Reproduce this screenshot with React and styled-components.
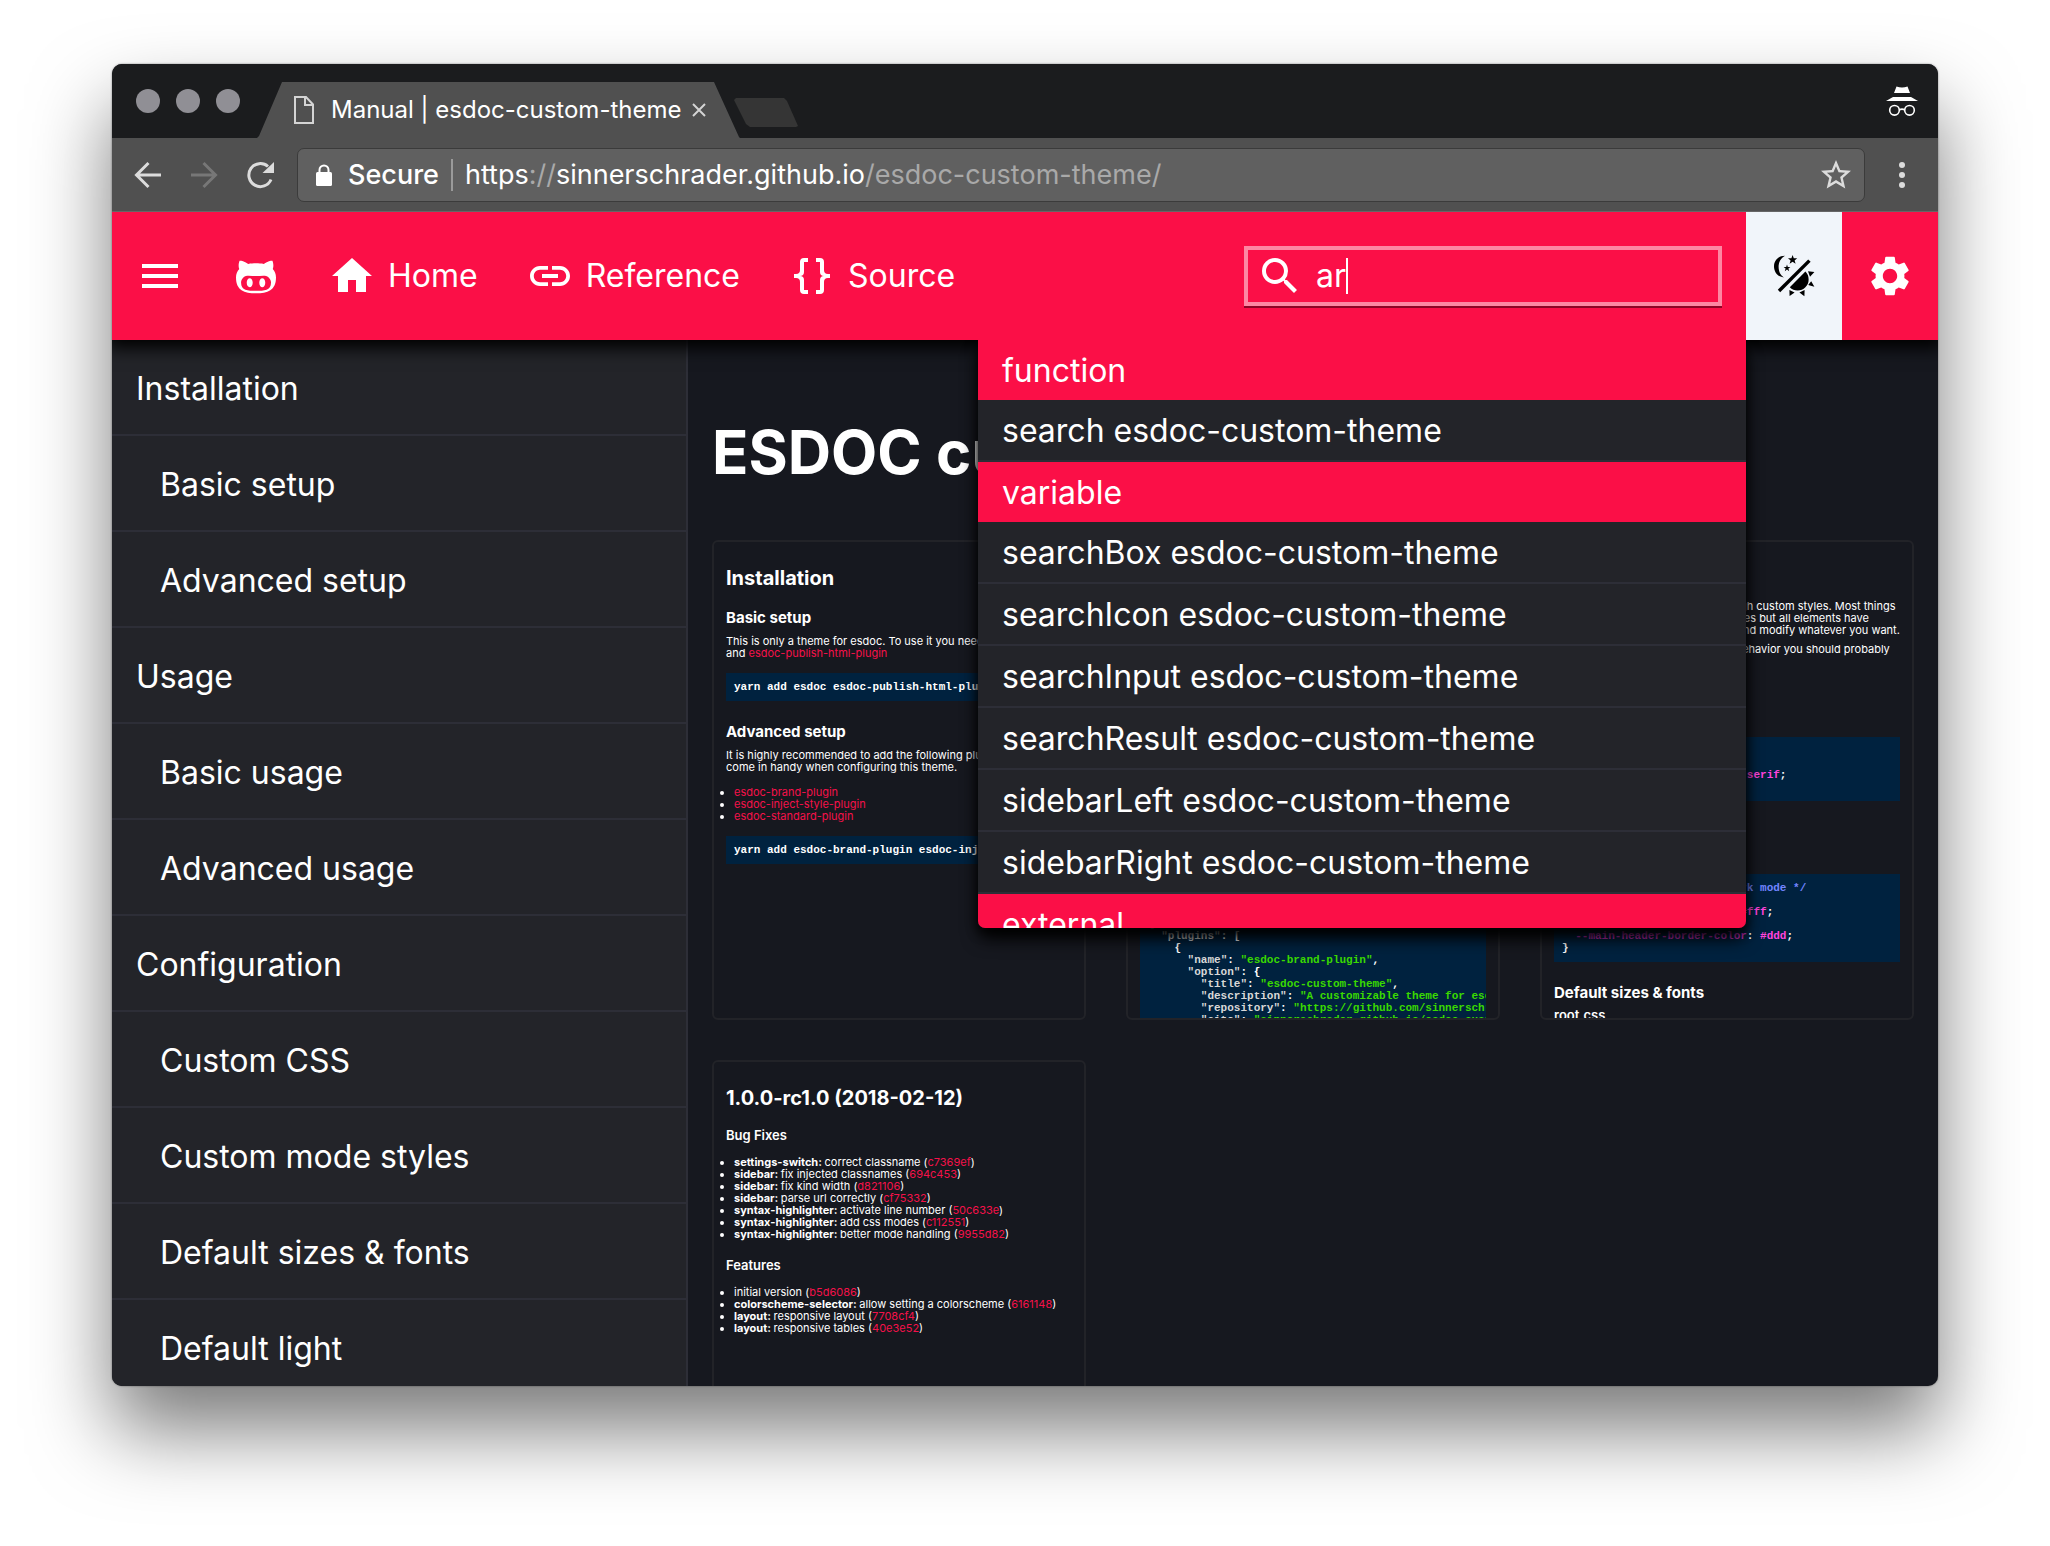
import React, { useState } from "react";
import styled, { createGlobalStyle, css } from "styled-components";
import { MdHome, MdLink, MdMenu, MdSearch, MdSettings, MdStarBorder } from "react-icons/md";

const color = {
  brand: "#fb0f47",
  page: "#16181f",
  panel: "#232429",
  line: "#2d2e37",
  code: "#00223f",
  chrome: "#505050",
};

const GlobalStyle = createGlobalStyle`
  *, *::before, *::after { box-sizing: border-box; }
  body {
    margin: 0;
    background: #fff;
    color: #fff;
    font-family: Inter, "Liberation Sans", sans-serif;
    -webkit-font-smoothing: antialiased;
  }
  a { color: inherit; text-decoration: none; }
  button { border: 0; padding: 0; background: none; color: inherit; font: inherit; cursor: pointer; }
  h1, h2, h3, h4, p, ul, pre { margin: 0; padding: 0; }
  svg { display: block; flex: none; }
`;

const Desktop = styled.div`
  height: 100vh;
  padding: 64px 112px 160px;
`;

const Window = styled.div`
  display: flex;
  flex-direction: column;
  height: 100%;
  overflow: hidden;
  border-radius: 10px;
  background: ${color.page};
  box-shadow: 0 0 2px rgba(0, 0, 0, 0.5), 0 44px 80px rgba(0, 0, 0, 0.52);
`;

/* ---------- browser chrome ---------- */

const TabStrip = styled.div`
  display: flex;
  align-items: flex-end;
  flex: none;
  height: 74px;
  padding: 0 20px 0 24px;
  background: #1b1c1e;
`;

const Lights = styled.div`
  display: flex;
  align-self: center;
  gap: 16px;
  width: 121px;
`;

const Light = styled.button`
  width: 24px;
  height: 24px;
  border-radius: 50%;
  background: #908f95;
`;

const Tab = styled.div`
  display: flex;
  align-items: center;
  height: 56px;
  width: 483px;
  padding: 0 34px 0 36px;
  background: ${color.chrome};
  clip-path: polygon(25px 0, 457px 0, 482px 55px, 483px 56px, 0 56px, 2px 54px);
  font-size: 24px;
  line-height: 32px;
  white-space: nowrap;
`;

const TabTitle = styled.span`
  flex: 1;
  margin-left: 16px;
`;

const NewTab = styled.button`
  width: 64px;
  height: 29px;
  margin: 0 auto 11px -6px;
  background: #353535;
  clip-path: polygon(0 2px, 2px 0, 50px 0, 53px 3px, 64px 28px, 62px 29px, 16px 29px, 12px 26px);
`;

const Incognito = styled.div`
  align-self: center;
`;

const Toolbar = styled.div`
  position: relative;
  z-index: 3;
  display: flex;
  align-items: center;
  flex: none;
  height: 74px;
  padding: 0 20px;
  background: ${color.chrome};
  border-bottom: 1px solid #666;
  color: #dcdcdc;
`;

const NavButton = styled.button`
  display: grid;
  place-items: center;
  width: 32px;
  height: 32px;
  margin-right: ${(p) => p.$gap || 24}px;
  color: ${(p) => (p.disabled ? "#777" : "#dcdcdc")};
`;

const AddressBar = styled.div`
  display: flex;
  align-items: center;
  flex: 1;
  height: 54px;
  padding: 0 10px 0 18px;
  border: 1px solid #3b3b3b;
  border-radius: 7px;
  background: #606060;
  color: #fff;
  font-size: 27px;
  line-height: 32px;
  white-space: nowrap;
`;

const Secure = styled.span`
  margin: 0 12px 0 16px;
  padding-right: 12px;
  border-right: 2px solid #9a9a9a;
  font-weight: 500;
`;

const Url = styled.span`
  flex: 1;
`;

const Faint = styled.span`
  color: #a9a9a9;
`;

const MenuButton = styled(NavButton)`
  margin: 0 0 0 21px;
`;

/* ---------- site header ---------- */

const Header = styled.header`
  position: relative;
  z-index: 2;
  display: flex;
  align-items: stretch;
  flex: none;
  height: 128px;
  background: ${color.brand};
  box-shadow: 0 4px 16px 4px #000;
  font-size: 32px;
  line-height: 40px;
`;

const IconButton = styled.button`
  display: grid;
  place-items: center;
  width: 96px;
  color: ${(p) => (p.$light ? "#000" : "#fff")};
  background: ${(p) => (p.$light ? "#f1f5fa" : "transparent")};
`;

const HeaderNav = styled.nav`
  display: flex;
  flex: 1;
`;

const HeaderLink = styled.a`
  display: flex;
  align-items: center;
  gap: 12px;
  padding: 0 24px;
`;

const SearchArea = styled.div`
  position: relative;
  display: flex;
  align-items: center;
  padding-right: 24px;
`;

const SearchField = styled.label`
  display: flex;
  align-items: center;
  width: 478px;
  height: 60px;
  padding: 0 8px;
  border: 4px solid #fd87a3;
  box-shadow: 0 2px 0 #8d0526;
`;

const SearchInput = styled.input`
  field-sizing: content;
  min-width: 16px;
  margin-left: 12px;
  padding: 0;
  border: 0;
  outline: 0;
  background: none;
  color: #fff;
  font: inherit;
`;

const Caret = styled.span`
  width: 2px;
  height: 36px;
  background: #fff;
`;

const Results = styled.div`
  position: absolute;
  top: 100%;
  right: 0;
  width: 768px;
  max-height: 588px;
  overflow: hidden;
  border-radius: 0 0 7px 7px;
  background: ${color.panel};
  box-shadow: 0 12px 18px -2px #000, 0 4px 12px rgba(0, 0, 0, 0.8);
  clip-path: inset(0 -40px -40px -40px);
`;

const resultRow = css`
  display: block;
  padding: 11px 24px 9px;
  font-size: 32px;
  line-height: 40px;
  font-weight: 400;
`;

const ResultKind = styled.h2`
  ${resultRow}
  background: ${color.brand};
`;

const ResultLink = styled.a`
  ${resultRow}
  border-bottom: 2px solid ${color.line};
`;

/* ---------- page ---------- */

const Body = styled.div`
  display: flex;
  flex: 1;
  min-height: 0;
`;

const Sidebar = styled.nav`
  flex: 0 0 576px;
  overflow: hidden;
  border-right: 2px solid ${color.line};
  background: ${color.panel};
`;

const SidebarLink = styled.a`
  display: block;
  padding: 29px 24px 25px ${(p) => (p.$nested ? 48 : 24)}px;
  border-bottom: 2px solid ${color.line};
  font-size: 32px;
  line-height: 40px;
`;

const Main = styled.main`
  flex: 1;
  min-width: 0;
  overflow: hidden;
  padding: 72px 24px 0;
`;

const PageTitle = styled.h1`
  margin-bottom: 48px;
  font-size: 60px;
  line-height: 80px;
  font-weight: 700;
`;

const Cards = styled.div`
  display: grid;
  grid-template-columns: repeat(3, minmax(0, 1fr));
  grid-auto-rows: 480px;
  gap: 40px;
`;

const Card = styled.article`
  overflow: hidden;
  padding: 24px 12px 0;
  border: 2px solid #222328;
  border-radius: 6px;
  font-size: 11px;
  line-height: 12px;
  white-space: nowrap;
`;

const H2 = styled.h2`
  font-size: 20px;
  line-height: 24px;
  font-weight: 700;
`;

const P = styled.p`
  margin-top: 7px;

  ${H2} + & {
    margin-top: 10px;
  }
`;

const List = styled.ul`
  margin-top: 13px;
  padding-left: 8px;
`;

const Code = styled.pre`
  margin-top: 14px;
  padding: 8px;
  overflow: hidden;
  background: ${color.code};
  color: #fff;
  font-family: "Liberation Mono", monospace;
  font-size: 11px;
  line-height: 12px;
  font-weight: 700;
`;

const H3 = styled.h3`
  margin-top: 18px;
  font-size: 15px;
  line-height: 20px;
  font-weight: 700;

  ${Code} + & {
    margin-top: 21px;
  }
`;

const H4 = styled.h4`
  margin-top: 17px;
  font-size: 13px;
  line-height: 16px;
  font-weight: 600;

  ${H3} + & {
    margin-top: 4px;
  }

  & + ${Code} {
    margin-top: 12px;
  }
`;

const Anchor = styled.a`
  color: #f5114a;
`;

const tokenColor = {
  string: "#3ad900",
  value: "#ff44dd",
  comment: "#7285ff",
  variable: "#d632c8",
  key: "#d8d8d8",
};

const Token = styled.span`
  color: ${(p) => tokenColor[p.$kind]};
`;

/* ---------- icons ---------- */

const BackIcon = () => (
  <svg width="28" height="28" viewBox="0 0 28 28" fill="none" stroke="currentColor" strokeWidth="3">
    <path d="M27 14H3M14.500 2L2.500 14l12 12" />
  </svg>
);

const ForwardIcon = () => (
  <svg width="28" height="28" viewBox="0 0 28 28" fill="none" stroke="currentColor" strokeWidth="3">
    <path d="M1 14h24M13.500 2l12 12-12 12" />
  </svg>
);

const ReloadIcon = () => (
  <svg width="28" height="28" viewBox="0 0 28 28">
    <path d="M25 18.500A11.500 11.500 0 1 1 22 5.500" fill="none" stroke="currentColor" strokeWidth="3" />
    <path d="M28 1v11H16.500z" fill="currentColor" />
  </svg>
);

const LockIcon = () => (
  <svg width="16" height="22" viewBox="0 0 16 22">
    <path d="M3.500 9V6a4.500 4.500 0 0 1 9 0v3" fill="none" stroke="#fff" strokeWidth="2" />
    <rect y="8" width="16" height="14" rx="1.500" fill="#fff" />
  </svg>
);

const PageIcon = () => (
  <svg width="22" height="30" viewBox="0 0 22 30" fill="none" stroke="#d4d4d4" strokeWidth="2">
    <path d="M2 2h11l7 7.500V28H2zM12 2v8h8" />
  </svg>
);

const CloseIcon = () => (
  <svg width="14" height="14" viewBox="0 0 14 14" stroke="#d4d4d4" strokeWidth="2">
    <path d="M1 1l12 12M13 1L1 13" />
  </svg>
);

const DotsIcon = () => (
  <svg width="6" height="28" viewBox="0 0 6 28" fill="currentColor">
    <circle cx="3" cy="4" r="3" />
    <circle cx="3" cy="14" r="3" />
    <circle cx="3" cy="24" r="3" />
  </svg>
);

const IncognitoIcon = () => (
  <svg width="32" height="30" viewBox="0 0 32 30">
    <path d="M10.500 0.500Q16 2.500 21.500 0.500L24 7H8zM7 11h18l7 4H0z" fill="#fff" />
    <g fill="none" stroke="#fff" strokeWidth="1.600">
      <circle cx="8.500" cy="24.300" r="4.800" />
      <circle cx="23.500" cy="24.300" r="4.800" />
      <path d="M13.300 23.800q2.700-1.400 5.400 0" />
    </g>
  </svg>
);

const GithubFaceIcon = () => (
  <svg width="48" height="48" viewBox="0 0 24 24" fill="currentColor">
    <path d="M20.380 8.530C20.540 8.130 21.060 6.540 20.210 4.390C20.210 4.390 18.900 4 15.910 6C14.660 5.670 13.330 5.620 12 5.620C10.680 5.620 9.340 5.670 8.090 6C5.100 3.970 3.790 4.390 3.790 4.390C2.940 6.540 3.460 8.130 3.630 8.530C2.610 9.620 2 11 2 12.720C2 19.160 6.160 20.610 12 20.610C17.790 20.610 22 19.160 22 12.720C22 11 21.390 9.620 20.380 8.530M12 19.380C7.880 19.380 4.530 19.190 4.530 15.190C4.530 14.240 5 13.340 5.800 12.610C7.140 11.380 9.430 12.030 12 12.030C14.590 12.030 16.850 11.380 18.200 12.610C19 13.340 19.500 14.230 19.500 15.190C19.500 19.180 16.130 19.380 12 19.380M8.860 13.120C8.040 13.120 7.360 14.120 7.360 15.340C7.360 16.570 8.040 17.580 8.860 17.580C9.690 17.580 10.360 16.580 10.360 15.340C10.360 14.110 9.690 13.120 8.860 13.120M15.140 13.120C14.310 13.120 13.640 14.110 13.640 15.340C13.640 16.580 14.310 17.580 15.140 17.580C15.960 17.580 16.640 16.580 16.640 15.340C16.640 14.110 16 13.120 15.140 13.120Z" />
  </svg>
);

const BracesIcon = () => (
  <svg width="48" height="48" viewBox="0 0 24 24" fill="currentColor">
    <path d="M8 3a2 2 0 0 0-2 2v4a2 2 0 0 1-2 2H3v2h1a2 2 0 0 1 2 2v4a2 2 0 0 0 2 2h2v-2H8v-5a2 2 0 0 0-2-2 2 2 0 0 0 2-2V5h2V3zM16 3a2 2 0 0 1 2 2v4a2 2 0 0 0 2 2h1v2h-1a2 2 0 0 0-2 2v4a2 2 0 0 1-2 2h-2v-2h2v-5a2 2 0 0 1 2-2 2 2 0 0 1-2-2V5h-2V3z" />
  </svg>
);

const DayNightIcon = () => (
  <svg width="48" height="48" viewBox="0 0 24 24">
    <path d="M7.500 1.900C4 1.900 2 4.400 2 7.200S4 12.500 6.900 12.700C5 11.500 4.300 9.500 4.300 7.300S5.500 3 7.500 1.900z" />
    <path d="M11.300 1.500l.6 1.600h1.700l-1.300 1.100.5 1.700-1.500-1-1.500 1 .5-1.700L9 3.100h1.700zM8.500 6.300l.4 1.200h1.300l-1 .8.400 1.300-1.100-.8-1.100.8.400-1.300-1-.8h1.300z" />
    <path d="M4.500 19.500L19.700 4.300" stroke="#000" strokeWidth="1.700" />
    <path d="M9.900 17.600A5.500 5.500 0 0 0 17.700 9.800zM19 9.600l3.200.4L20 12.400zM20.600 14.600l-1.500 1.900 3.100.9zM17.300 19l-2.600 1.200 2.500 1.900zM9.700 19l2.600 1.300L9.800 22z" />
  </svg>
);

/* ---------- data ---------- */

const chapters = [
  ["Installation"],
  ["Basic setup", true],
  ["Advanced setup", true],
  ["Usage"],
  ["Basic usage", true],
  ["Advanced usage", true],
  ["Configuration"],
  ["Custom CSS", true],
  ["Custom mode styles", true],
  ["Default sizes & fonts", true],
  ["Default light", true],
];

const results = [
  ["function", ["search"]],
  ["variable", ["searchBox", "searchIcon", "searchInput", "searchResult", "sidebarLeft", "sidebarRight"]],
  ["external", []],
];

const fixes = [
  ["settings-switch:", "correct classname", "c7369ef"],
  ["sidebar:", "fix injected classnames", "694c453"],
  ["sidebar:", "fix kind width", "d821106"],
  ["sidebar:", "parse url correctly", "cf75332"],
  ["syntax-highlighter:", "activate line number", "50c633e"],
  ["syntax-highlighter:", "add css modes", "c112551"],
  ["syntax-highlighter:", "better mode handling", "9955d82"],
];

const features = [
  ["", "initial version", "b5d6086"],
  ["colorscheme-selector:", "allow setting a colorscheme", "6161148"],
  ["layout:", "responsive layout", "7708cf4"],
  ["layout:", "responsive tables", "40e3e52"],
];

const plugins = [
  ["name", "esdoc-brand-plugin", 6],
  ["option", null, 6],
  ["title", "esdoc-custom-theme", 8],
  ["description", "A customizable theme for esdoc", 8],
  ["repository", "https://github.com/sinnerschrader/esdoc-custom-theme", 8],
  ["site", "sinnerschrader.github.io/esdoc-custom-theme", 8],
];

function ChangeList({ items }) {
  return (
    <List>
      {items.map(([scope, text, hash]) => (
        <li key={hash}>
          {scope && <b>{scope} </b>}
          {text} (<Anchor href={"#" + hash}>{hash}</Anchor>)
        </li>
      ))}
    </List>
  );
}

function BrowserBars() {
  return (
    <>
      <TabStrip>
        <Lights>
          <Light aria-label="Close window" />
          <Light aria-label="Minimize window" />
          <Light aria-label="Zoom window" />
        </Lights>
        <Tab>
          <PageIcon />
          <TabTitle>Manual | esdoc-custom-theme</TabTitle>
          <button aria-label="Close tab"><CloseIcon /></button>
        </Tab>
        <NewTab aria-label="New tab" />
        <Incognito><IncognitoIcon /></Incognito>
      </TabStrip>
      <Toolbar>
        <NavButton aria-label="Back"><BackIcon /></NavButton>
        <NavButton aria-label="Forward" disabled><ForwardIcon /></NavButton>
        <NavButton aria-label="Reload" $gap={21}><ReloadIcon /></NavButton>
        <AddressBar>
          <LockIcon />
          <Secure>Secure</Secure>
          <Url>https<Faint>://</Faint>sinnerschrader.github.io<Faint>/esdoc-custom-theme/</Faint></Url>
          <button aria-label="Bookmark this page"><MdStarBorder size={36} color="#dcdcdc" /></button>
        </AddressBar>
        <MenuButton aria-label="Browser menu"><DotsIcon /></MenuButton>
      </Toolbar>
    </>
  );
}

function SiteHeader() {
  const [query, setQuery] = useState("ar");
  return (
    <Header>
      <IconButton aria-label="Menu"><MdMenu size={48} /></IconButton>
      <IconButton aria-label="GitHub"><GithubFaceIcon /></IconButton>
      <HeaderNav>
        <HeaderLink href="#home"><MdHome size={48} />Home</HeaderLink>
        <HeaderLink href="#reference"><MdLink size={48} />Reference</HeaderLink>
        <HeaderLink href="#source"><BracesIcon />Source</HeaderLink>
      </HeaderNav>
      <SearchArea>
        <SearchField>
          <MdSearch size={48} />
          <SearchInput aria-label="Search" value={query} onChange={(e) => setQuery(e.target.value)} />
          <Caret />
        </SearchField>
        <Results>
          {results.map(([kind, names]) => (
            <React.Fragment key={kind}>
              <ResultKind>{kind}</ResultKind>
              {names.map((name) => (
                <ResultLink key={name} href={"#" + name}>{name} esdoc-custom-theme</ResultLink>
              ))}
            </React.Fragment>
          ))}
        </Results>
      </SearchArea>
      <IconButton aria-label="Toggle light mode" $light><DayNightIcon /></IconButton>
      <IconButton aria-label="Settings"><MdSettings size={48} /></IconButton>
    </Header>
  );
}

function InstallationCard() {
  return (
    <Card>
      <H2>Installation</H2>
      <H3>Basic setup</H3>
      <P>
        This is only a theme for esdoc. To use it you need esdoc
        <br />
        and <Anchor href="#publish">esdoc-publish-html-plugin</Anchor>
      </P>
      <Code>yarn add esdoc esdoc-publish-html-plugin</Code>
      <H3>Advanced setup</H3>
      <P>
        It is highly recommended to add the following plugins. They
        <br />
        come in handy when configuring this theme.
      </P>
      <List>
        <li><Anchor href="#brand">esdoc-brand-plugin</Anchor></li>
        <li><Anchor href="#inject">esdoc-inject-style-plugin</Anchor></li>
        <li><Anchor href="#standard">esdoc-standard-plugin</Anchor></li>
      </List>
      <Code>yarn add esdoc-brand-plugin esdoc-inject-style-plugin</Code>
    </Card>
  );
}

function UsageCard() {
  return (
    <Card>
      <H2>Usage</H2>
      <P>Add the theme to your esdoc configuration.</P>
      <H3>Basic usage</H3>
      <Code>{`{
  "source": "./src",
  "destination": "./docs",
  "plugins": [
    {
      "name": "esdoc-publish-html-plugin",
      "option": {
        "template":
          "node_modules/esdoc-custom-theme"
      }
    }
  ]
}`}</Code>
      <H3>Advanced usage</H3>
      <P>Customize the brand with additional plugins.</P>
      <Code>
        {'{\n  '}<Token $kind="key">"plugins"</Token>{': [\n    {\n'}
        {plugins.map(([key, value, indent]) => (
          <React.Fragment key={key}>
            {" ".repeat(indent)}
            <Token $kind="key">"{key}"</Token>:{" "}
            {value ? <><Token $kind="string">"{value}"</Token>,</> : "{"}
            {"\n"}
          </React.Fragment>
        ))}
      </Code>
    </Card>
  );
}

function ConfigurationCard() {
  return (
    <Card>
      <H2>Configuration</H2>
      <P>
        This theme can be configured through custom styles. Most things
        <br />
        can be changed by using css variables but all elements have
        <br />
        class names, so you can find them and modify whatever you want.
      </P>
      <P>
        If you want to alter the color mode behavior you should probably
        <br />
        use the mode styles.
      </P>
      <H3>Custom CSS</H3>
      <H4>custom css</H4>
      <Code>
        {":root {\n\n  --font-family: Lato, sans"}<Token $kind="value">-serif</Token>{";\n}"}
      </Code>
      <H3>Custom mode styles</H3>
      <H4>mode css</H4>
      <Code>
        <Token $kind="comment">{"/* custom colors for the dark mode */"}</Token>
        {"\n.dark {\n  "}<Token $kind="variable">--main-header-color</Token>:{"     "}<Token $kind="value">#fff</Token>{";\n\n  "}
        <Token $kind="variable">--main-header-border-color</Token>: <Token $kind="value">#ddd</Token>{";\n}"}
      </Code>
      <H3>Default sizes &amp; fonts</H3>
      <H4>root.css</H4>
    </Card>
  );
}

function ChangelogCard() {
  return (
    <Card>
      <H2>1.0.0-rc1.0 (2018-02-12)</H2>
      <H4>Bug Fixes</H4>
      <ChangeList items={fixes} />
      <H4>Features</H4>
      <ChangeList items={features} />
    </Card>
  );
}

export default function App() {
  return (
    <>
      <GlobalStyle />
      <Desktop>
        <Window>
          <BrowserBars />
          <SiteHeader />
          <Body>
            <Sidebar>
              {chapters.map(([title, nested]) => (
                <SidebarLink key={title} href="#manual" $nested={nested}>{title}</SidebarLink>
              ))}
            </Sidebar>
            <Main>
              <PageTitle>ESDOC custom theme</PageTitle>
              <Cards>
                <InstallationCard />
                <UsageCard />
                <ConfigurationCard />
                <ChangelogCard />
              </Cards>
            </Main>
          </Body>
        </Window>
      </Desktop>
    </>
  );
}
